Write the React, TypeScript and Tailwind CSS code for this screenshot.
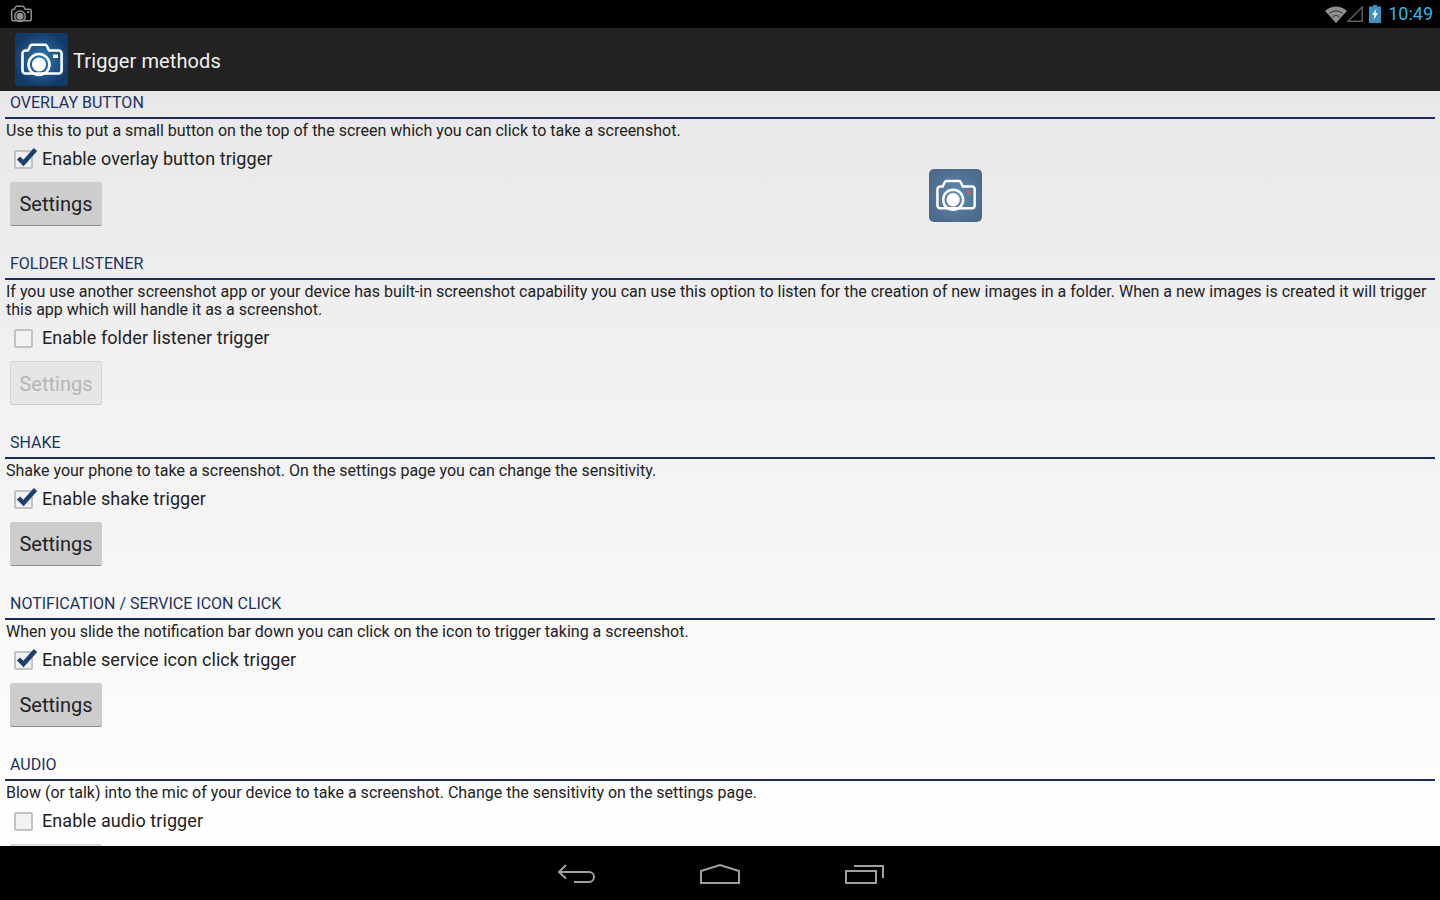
import React from 'react';

const CameraGlyph: React.FC<{ className?: string; stroke?: string; dot?: string; lens?: string; sw?: number }> = ({
  className,
  stroke = '#fff',
  dot = '#fff',
  lens = '#fff',
  sw = 2.6,
}) => (
  <svg viewBox="0 0 42 34" className={className} fill="none">
    <path
      d="M4.500 7.500h2.500l2.500-5a1.500 1.500 0 0 1 1.300-.8h13.500a1.500 1.500 0 0 1 1.300.8l2.500 5h9.500a3 3 0 0 1 3 3v17a3 3 0 0 1-3 3H4.500a3 3 0 0 1-3-3v-17a3 3 0 0 1 3-3Z"
      stroke={stroke}
      strokeWidth={sw}
      strokeLinejoin="round"
    />
    <circle cx="18" cy="21.500" r="10.500" stroke={stroke} strokeWidth={sw} />
    <circle cx="18" cy="21.500" r="7" fill={lens} />
    <rect x="32" y="11.500" width="5" height="3.500" fill={dot} />
  </svg>
);

const Check: React.FC<{ checked: boolean }> = ({ checked }) => (
  <span className="relative block w-[19px] h-[19px] border-2 border-[#c2c2c2] rounded-[2px] bg-[#f2f2f2]">
    {checked && (
      <svg viewBox="0 0 24 20" className="absolute left-[-1px] top-[-5px] w-[24px] h-[20px]" fill="none">
        <path d="M3.500 11l5 5L20.500 2.500" stroke="#1c3f6e" strokeWidth="4.500" />
      </svg>
    )}
  </span>
);

type SectionProps = {
  title: string;
  text: string;
  label: string;
  checked: boolean;
  disabled?: boolean;
  children?: React.ReactNode;
};

const Section: React.FC<SectionProps> = ({ title, text, label, checked, disabled, children }) => (
  <section className="relative pb-[26px]">
    <h2 className="h-[26px] pl-[10px] pr-[5px] pt-[2px] text-[16px] leading-[20px] text-[#1a3263] uppercase">{title}</h2>
    <div className="mx-[5px] h-[2px] bg-[#1a2a66]" />
    <p className="pl-[6px] pr-[5px] pt-[3px] text-[16px] leading-[18px] text-[#222]">{text}</p>
    <label className="flex items-center h-[38px] pl-[14px] gap-[9px] text-[18px] tracking-[0.07px] text-[#222]">
      <Check checked={checked} />
      <span className="pb-[1px]">{label}</span>
    </label>
    <button
      className={
        disabled
          ? 'block ml-[10px] mt-[4px] pt-[1px] w-[92px] h-[44px] rounded-[2px] border border-[#d4d4d4] border-b-[#c8c8c8] bg-[#e6e6e6] text-[20px] text-[#b5b5b5]'
          : 'block ml-[10px] mt-[4px] pt-[1px] w-[92px] h-[44px] rounded-[2px] border-b border-b-[#8f8f8f] bg-[#cdcdcd] text-[20px] text-[#222]'
      }
    >
      Settings
    </button>
    {children}
  </section>
);

export default function App() {
  return (
    <div className="w-[1440px] h-[900px] flex flex-col overflow-hidden bg-black font-['Roboto',sans-serif]">
      {/* status bar */}
      <div className="h-[28px] shrink-0 flex items-center justify-between pl-[11px] pr-[7px] bg-black">
        <CameraGlyph className="w-[21px] h-[18px]" stroke="#8f8f8f" lens="#8f8f8f" dot="#8f8f8f" sw={3} />
        <div className="flex items-center">
          <svg viewBox="0 0 22 17" className="w-[22px] h-[17px]" fill="none">
            <path d="M0 5C6-1 16-1 22 5L11 17Z" fill="#8e8e8e" />
            <path d="M4.500 7.500C8.500 4 13.500 4 17.500 7.500M7.500 11C10 9 12 9 14.500 11" stroke="#2a2a2a" strokeWidth="1" />
          </svg>
          <svg viewBox="0 0 16 16" className="w-[16px] h-[16px]" fill="none">
            <path d="M1 15.200L15.200 1v14.200Z" stroke="#5c5c5c" strokeWidth="1.500" />
          </svg>
          <svg viewBox="0 0 12 18" className="w-[12px] h-[18px] ml-[6px]">
            <path d="M4 0h4v1.500h4V18H0V1.500h4Z" fill="#3d93bd" />
            <path d="M7.500 3.500L3 10h2.500L4.500 15l4.500-7H6.500Z" fill="#fff" />
          </svg>
          <span className="ml-[7px] text-[18px] leading-[28px] text-[#33b5e5]">10:49</span>
        </div>
      </div>

      {/* action bar */}
      <div className="h-[63px] shrink-0 flex items-center pl-[15px] bg-[#222222]">
        <div className="w-[53px] h-[53px] flex items-center justify-center rounded-[4px] bg-[radial-gradient(circle,#2f7ab5_0%,#123a69_75%)]">
          <CameraGlyph className="w-[42px] h-[34px]" />
        </div>
        <h1 className="ml-[5px] pt-[2px] text-[20px] tracking-[0.1px] text-[#f0f0f0]">Trigger methods</h1>
      </div>

      {/* content */}
      <main className="h-[755px] shrink-0 overflow-hidden bg-gradient-to-b from-[#e8e8e8] to-white">
        <Section
          title="Overlay button"
          text="Use this to put a small button on the top of the screen which you can click to take a screenshot."
          label="Enable overlay button trigger"
          checked
        >
          <div className="absolute left-[929px] top-[78px] w-[53px] h-[53px] flex items-center justify-center rounded-[5px] bg-[radial-gradient(circle,#5f8db3_0%,#4d6a8c_75%)]">
            <CameraGlyph className="w-[40px] h-[33px]" dot="#c9605f" />
          </div>
        </Section>
        <Section
          title="Folder listener"
          text="If you use another screenshot app or your device has built-in screenshot capability you can use this option to listen for the creation of new images in a folder. When a new images is created it will trigger this app which will handle it as a screenshot."
          label="Enable folder listener trigger"
          checked={false}
          disabled
        />
        <Section
          title="Shake"
          text="Shake your phone to take a screenshot. On the settings page you can change the sensitivity."
          label="Enable shake trigger"
          checked
        />
        <Section
          title="Notification / service icon click"
          text="When you slide the notification bar down you can click on the icon to trigger taking a screenshot."
          label="Enable service icon click trigger"
          checked
        />
        <Section
          title="Audio"
          text="Blow (or talk) into the mic of your device to take a screenshot. Change the sensitivity on the settings page."
          label="Enable audio trigger"
          checked={false}
          disabled
        />
      </main>

      {/* nav bar */}
      <nav className="flex-1 flex items-center justify-center gap-[104px] pl-[2px] pt-[2px] bg-black">
        <svg viewBox="0 0 38 22" className="w-[38px] h-[22px] text-[#a0a0a0]" fill="none" stroke="currentColor" strokeWidth="2">
          <path d="M9 2L2 9l7 6.500M2 9h30a4.500 4.500 0 0 1 0 10H17" />
        </svg>
        <svg viewBox="0 0 42 22" className="w-[42px] h-[22px] text-[#a0a0a0]" fill="none" stroke="currentColor" strokeWidth="2">
          <path d="M2 20V8L21 2l19 6v12Z" />
        </svg>
        <svg viewBox="0 0 40 22" className="w-[40px] h-[22px] text-[#a0a0a0]" fill="none" stroke="currentColor" strokeWidth="2">
          <path d="M1 8h30v12H1ZM9 3h29v12" />
        </svg>
      </nav>
    </div>
  );
}
